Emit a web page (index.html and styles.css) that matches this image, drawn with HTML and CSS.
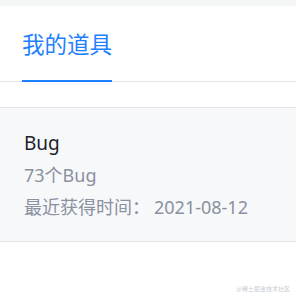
FILE: index.html
```html
<!DOCTYPE html>
<html lang="zh-CN">
<head>
<meta charset="utf-8">
<link rel="stylesheet" href="styles.css">
</head>
<body>
<div class="topbar"></div>
<div class="tabs">
  <div class="tab">我的道具</div>
</div>
<div class="card">
  <div class="name">Bug</div>
  <div class="meta">73个Bug</div>
  <div class="meta">最近获得时间：<span class="date">2021-08-12</span></div>
</div>
<div class="watermark">@稀土掘金技术社区</div>
</body>
</html>
```
FILE: styles.css
```css
html, body {
  margin: 0;
  padding: 0;
  background: #fff;
  font-family: "Noto Sans", "Noto Sans CJK SC", sans-serif;
}
body {
  position: relative;
  width: 296px;
  height: 296px;
  overflow: hidden;
}
.topbar {
  height: 6px;
  background: #f4f5f5;
}
.tabs {
  display: flex;
  padding-left: 22px;
  border-bottom: 1px solid #e4e6eb;
}
.tab {
  font-size: 22.5px;
  line-height: 30px;
  padding-top: 24px;
  padding-bottom: 20px;
  color: #1e80ff;
  border-bottom: 2px solid #1e80ff;
  margin-bottom: -1px;
}
.card {
  margin-top: 25px;
  background: #f7f8fa;
  border-top: 1px solid #e4e6eb;
  border-bottom: 1px solid #e4e6eb;
  padding: 19px 24px 18px;
}
.name {
  font-size: 19px;
  line-height: 32px;
  color: #1d2129;
}
.meta {
  font-size: 18px;
  line-height: 32px;
  color: #8a919f;
}
.date {
  margin-left: 4px;
}
.watermark {
  position: absolute;
  right: 6px;
  bottom: 3px;
  font-size: 6px;
  color: #c9cdd4;
  font-family: "Noto Sans CJK SC", sans-serif;
}
```
